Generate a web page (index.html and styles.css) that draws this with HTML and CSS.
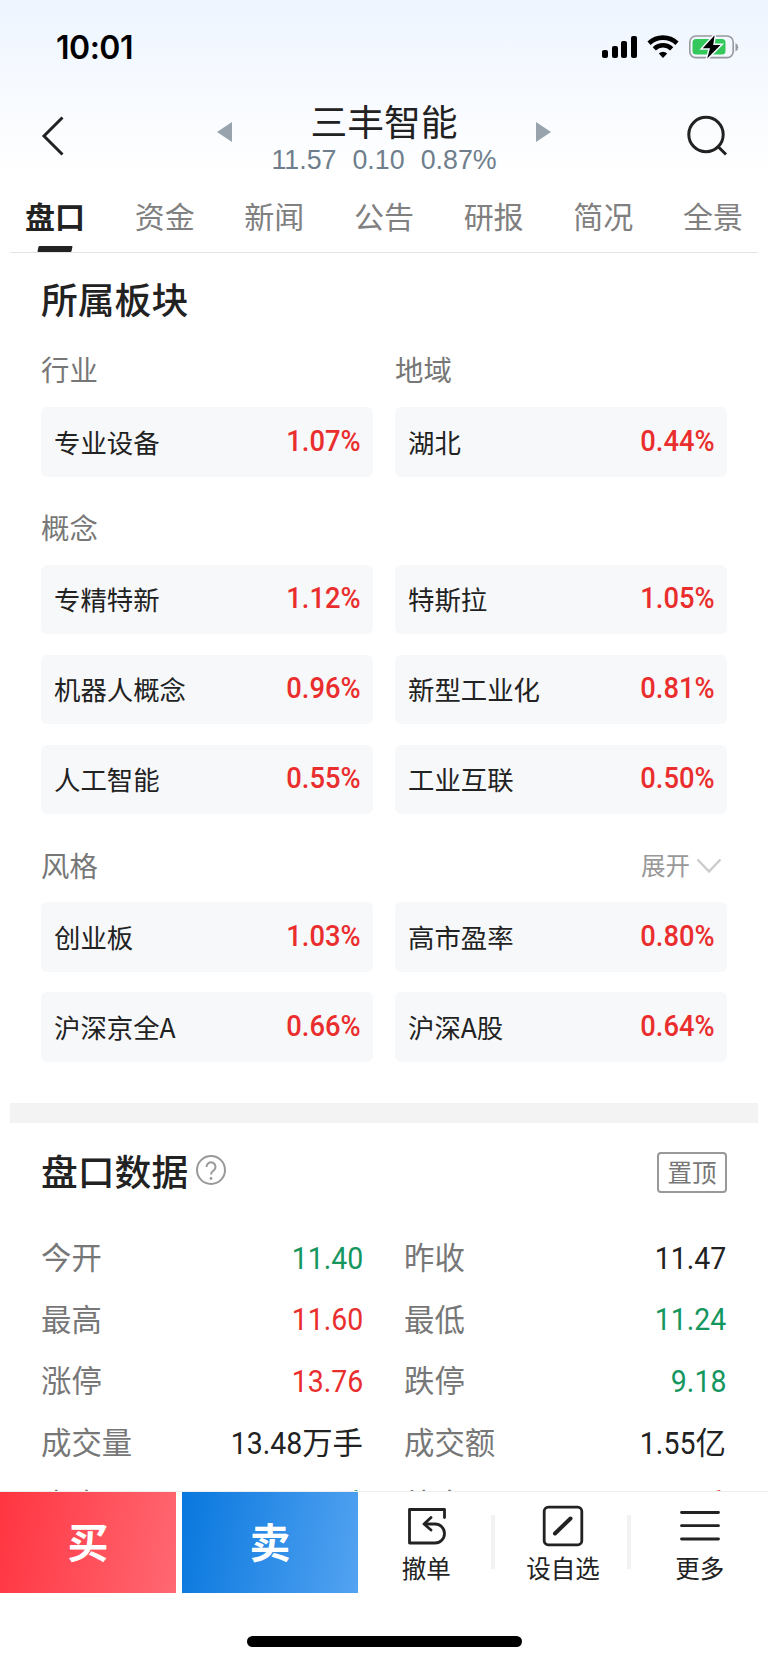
FILE: index.html
```html
<!DOCTYPE html>
<html lang="zh-CN">
<head>
    <meta charset="UTF-8">
    <meta name="viewport" content="width=device-width, initial-scale=1.0">
    <title>三丰智能</title>
    <link rel="stylesheet" href="styles.css">
</head>
<body>
    <div class="top">
        <div class="status-bar">
            <span class="time">10:01</span>
            <svg class="status-icons" width="138" height="26" viewBox="0 0 138 26">
                <rect x="0" y="15" width="6" height="8" rx="2"/>
                <rect x="10" y="11" width="6" height="12" rx="2"/>
                <rect x="19" y="6" width="6" height="17" rx="2"/>
                <rect x="29" y="1" width="6" height="22" rx="2"/>
                <g fill="none" stroke="#000" stroke-width="4.6">
                    <path d="M47 8.2a20.5 20.5 0 0 1 28 0"/>
                    <path d="M52.3 13.8a12.6 12.6 0 0 1 17.4 0"/>
                </g>
                <path d="M56.8 18.6a6.5 6.5 0 0 1 8.4 0L61 23z"/>
                <rect x="87.8" y="1" width="43.4" height="21.6" rx="6" fill="none" stroke="#98999d" stroke-width="1.6"/>
                <path d="M133.5 8v8.4a4.6 4.6 0 0 0 0-8.4z" fill="#98999d"/>
                <rect x="90.5" y="4" width="33" height="15.5" rx="3.5" fill="#34c759"/>
                <path d="M112.6.2L100.8 13.3h7.2L105.2 23.6 118.5 10h-7.3z" stroke="#f5f9ff" stroke-width="3" paint-order="stroke"/>
            </svg>
        </div>
        <div class="nav-bar">
            <svg class="back" width="24" height="42" viewBox="0 0 24 42"><path d="M21.500 2.500L3 21l18.500 18.500"/></svg>
            <div class="stock">
                <span class="arrow prev"></span>
                <div class="stock-info">
                    <h1>三丰智能</h1>
                    <div class="quote"><span>11.57</span><span>0.10</span><span>0.87%</span></div>
                </div>
                <span class="arrow next"></span>
            </div>
            <svg class="search" width="44" height="44" viewBox="0 0 44 44"><circle cx="20" cy="20.500" r="17.200"/><path d="M32.500 33l7.500 7.500"/></svg>
        </div>
    </div>

    <div class="tabs">
        <span class="tab active">盘口</span>
        <span class="tab">资金</span>
        <span class="tab">新闻</span>
        <span class="tab">公告</span>
        <span class="tab">研报</span>
        <span class="tab">简况</span>
        <span class="tab">全景</span>
    </div>

    <div class="content">
        <section class="sectors">
            <h2>所属板块</h2>
            <div class="label-row two"><span>行业</span><span>地域</span></div>
            <div class="cards">
                <div class="card"><span>专业设备</span><b>1.07%</b></div>
                <div class="card"><span>湖北</span><b>0.44%</b></div>
            </div>
            <div class="label-row"><span>概念</span></div>
            <div class="cards">
                <div class="card"><span>专精特新</span><b>1.12%</b></div>
                <div class="card"><span>特斯拉</span><b>1.05%</b></div>
                <div class="card"><span>机器人概念</span><b>0.96%</b></div>
                <div class="card"><span>新型工业化</span><b>0.81%</b></div>
                <div class="card"><span>人工智能</span><b>0.55%</b></div>
                <div class="card"><span>工业互联</span><b>0.50%</b></div>
            </div>
            <div class="label-row">
                <span>风格</span>
                <span class="expand">展开<svg width="26" height="16" viewBox="0 0 26 16"><path d="M1.500 1.500L13 13.500l11.500-12"/></svg></span>
            </div>
            <div class="cards">
                <div class="card"><span>创业板</span><b>1.03%</b></div>
                <div class="card"><span>高市盈率</span><b>0.80%</b></div>
                <div class="card"><span>沪深京全A</span><b>0.66%</b></div>
                <div class="card"><span>沪深A股</span><b>0.64%</b></div>
            </div>
        </section>

        <div class="divider"></div>

        <section class="market">
            <div class="market-head">
                <h2>盘口数据</h2>
                <svg class="help" width="32" height="32" viewBox="0 0 32 32"><circle cx="16" cy="16" r="14"/><path d="M11.500 13a4.500 4.500 0 1 1 7.200 3.400c-1.700 1.300-2.700 2-2.700 4.100"/><circle class="dot" cx="16" cy="24.500" r="1.400"/></svg>
                <span class="pin">置顶</span>
            </div>
            <div class="data">
                <div class="item"><span>今开</span><b class="down"><i>11.40</i></b></div>
                <div class="item"><span>昨收</span><b><i>11.47</i></b></div>
                <div class="item"><span>最高</span><b class="up"><i>11.60</i></b></div>
                <div class="item"><span>最低</span><b class="down"><i>11.24</i></b></div>
                <div class="item"><span>涨停</span><b class="up"><i>13.76</i></b></div>
                <div class="item"><span>跌停</span><b class="down"><i>9.18</i></b></div>
                <div class="item"><span>成交量</span><b><i>13.48</i>万手</b></div>
                <div class="item"><span>成交额</span><b><i>1.55</i>亿</b></div>
                <div class="item"><span>内盘</span><b class="down">手</b></div>
                <div class="item"><span>外盘</span><b class="up">手</b></div>
            </div>
        </section>
    </div>

    <footer>
        <div class="toolbar">
            <div class="trade buy">买</div>
            <div class="trade sell">卖</div>
            <div class="tool">
                <svg width="42" height="42" viewBox="0 0 42 42"><path d="M39.500 12.500V4.500H4.500v33.500H30a9.500 9.500 0 0 0 0-19H20"/><path d="M26 12.500l-7 6.500 7 6"/></svg>
                <span>撤单</span>
            </div>
            <div class="tool">
                <svg width="42" height="42" viewBox="0 0 42 42"><rect x="2.200" y="2.200" width="37.600" height="37.600" rx="4"/><path class="thick" d="M13 28.500L28.500 13.500"/></svg>
                <span>设自选</span>
            </div>
            <div class="tool">
                <svg width="42" height="42" viewBox="0 0 42 42"><path d="M2.500 7.500h37M2.500 20.700h37M2.500 34h37"/></svg>
                <span>更多</span>
            </div>
        </div>
        <div class="home-indicator"></div>
    </footer>
</body>
</html>
```
FILE: styles.css
```css
* {
    box-sizing: border-box;
}

body {
    margin: 0;
    width: 768px;
    height: 1663px;
    overflow: hidden;
    display: flex;
    flex-direction: column;
    background: #fff;
    color: #222;
    font-family: "Noto Sans CJK SC", sans-serif;
}

h1, h2, b, i {
    margin: 0;
    font-weight: 500;
    font-style: normal;
}

svg {
    flex: none;
}

.top {
    height: 188px;
    background: linear-gradient(#eef5ff, #fff 175px);
}

.status-bar {
    height: 94px;
    padding: 1px 28px 0 56px;
    display: flex;
    justify-content: space-between;
    align-items: center;
}

.time {
    font-family: Inter, sans-serif;
    font-size: 32px;
    font-weight: 600;
    letter-spacing: -0.5px;
    color: #000;
}

.nav-bar {
    height: 80px;
    padding: 3px 38px 0 41px;
    display: flex;
    justify-content: space-between;
    align-items: center;
}

.back, .search {
    fill: none;
    stroke: #222;
    stroke-width: 3;
}

.stock {
    width: 334px;
    margin: 5px 0 0 17px;
    display: flex;
    justify-content: space-between;
    align-items: center;
}

.stock-info {
    text-align: center;
}

.stock h1 {
    font-size: 36.8px;
    font-weight: 400;
    line-height: 44px;
}

.quote {
    display: flex;
    gap: 16px;
    font: 26.8px/37px "Liberation Sans", sans-serif;
    color: #6f7e8c;
}

.arrow {
    border: solid transparent;
    border-width: 10px 0;
    margin-bottom: 13px;
}

.prev {
    border-right: 15px solid #98a3ad;
}

.next {
    border-left: 15px solid #98a3ad;
}

.tabs {
    height: 65px;
    margin: 0 10px;
    padding: 0 15px;
    display: flex;
    justify-content: space-between;
    border-bottom: 1px solid #e4e4e4;
}

.tab {
    display: flex;
    flex-direction: column;
    justify-content: space-between;
    font-size: 30px;
    line-height: 55px;
    color: #808080;
}

.active {
    font-weight: 700;
    color: #222;
}

.active::after {
    content: "";
    width: 34px;
    height: 6px;
    margin-left: 13px;
    border-radius: 1px;
    background: #222;
    transform: skewX(-12deg);
}

.content {
    flex: 1;
    min-height: 0;
    overflow: hidden;
}

.sectors {
    padding: 19px 41px 41px;
}

h2 {
    font-size: 36.8px;
    line-height: 53px;
}

.label-row {
    height: 88px;
    padding-top: 13px;
    display: flex;
    justify-content: space-between;
    align-items: center;
    font-size: 28.4px;
    line-height: 40px;
    color: #777;
}

.two {
    height: 82px;
    padding-top: 6px;
    display: grid;
    grid-template-columns: 1fr 1fr;
    column-gap: 22px;
}

.expand {
    display: flex;
    align-items: center;
    gap: 6px;
    padding-right: 5px;
    font-size: 24.5px;
    color: #999;
}

.expand svg {
    margin-top: 2px;
    fill: none;
    stroke: #ccc;
    stroke-width: 2.5;
}

.cards {
    display: grid;
    grid-template-columns: 1fr 1fr;
    gap: 20.5px 22px;
}

.card {
    height: 69.5px;
    padding: 0 12px 1px 13px;
    display: flex;
    justify-content: space-between;
    align-items: center;
    border-radius: 6px;
    background: #f7f8fa;
    font-size: 26.4px;
}

.card b {
    margin-bottom: 2px;
    font: 500 30px Roboto, sans-serif;
    color: #ea2e2e;
    transform: scaleX(0.91);
    transform-origin: right;
}

.divider {
    height: 20px;
    margin: 0 10px;
    background: #f3f3f3;
}

.market {
    padding: 22px 41px 0;
}

.market-head {
    height: 54px;
    display: flex;
    align-items: center;
}

.market-head h2 {
    margin-top: -2px;
}

.help {
    margin: -4px 0 0 7px;
    fill: none;
    stroke: #999;
    stroke-width: 2;
}

.help .dot {
    fill: #999;
    stroke: none;
}

.pin {
    width: 70px;
    height: 41px;
    margin: 1px 0 0 auto;
    border: 2px solid #999;
    border-radius: 4px;
    font-size: 24.5px;
    line-height: 36px;
    text-align: center;
    color: #777;
}

.data {
    padding-top: 27px;
    display: grid;
    grid-template-columns: 322px 322px;
    column-gap: 41px;
}

.item {
    height: 61.6px;
    display: flex;
    justify-content: space-between;
    align-items: center;
    font-size: 30.4px;
    color: #777;
}

.item b {
    display: flex;
    align-items: center;
    font-weight: 400;
    color: #222;
}

.item i {
    margin-top: 3px;
    font: 400 32px Roboto, sans-serif;
    transform: scaleX(0.89);
    transform-origin: right;
}

.item .up {
    color: #ea2e2e;
}

.item .down {
    color: #15965f;
}

footer {
    height: 172px;
    border-top: 1px solid #eee;
    background: #fff;
}

.toolbar {
    height: 101px;
    display: flex;
}

.trade {
    width: 176px;
    font-size: 41px;
    font-weight: 700;
    line-height: 96px;
    text-align: center;
    color: #fff;
}

.buy {
    margin-right: 6px;
    background: linear-gradient(100deg, #ff3541, #ff6872);
}

.sell {
    background: linear-gradient(100deg, #0877de, #53a3f1);
}

.tool {
    flex: 1;
    padding-top: 13px;
    display: flex;
    flex-direction: column;
    align-items: center;
    font-size: 24.5px;
    line-height: 42px;
    background: linear-gradient(#f2f2f2, #f2f2f2) right 23px / 4px 54px no-repeat;
}

.tool:last-child {
    background: none;
}

.tool svg {
    fill: none;
    stroke: #222;
    stroke-width: 2.8;
    stroke-linecap: round;
    stroke-linejoin: round;
}

.tool .thick {
    stroke-width: 4;
}

.home-indicator {
    width: 275px;
    height: 11px;
    margin: 43px auto 0;
    border-radius: 6px;
    background: #000;
}
```
